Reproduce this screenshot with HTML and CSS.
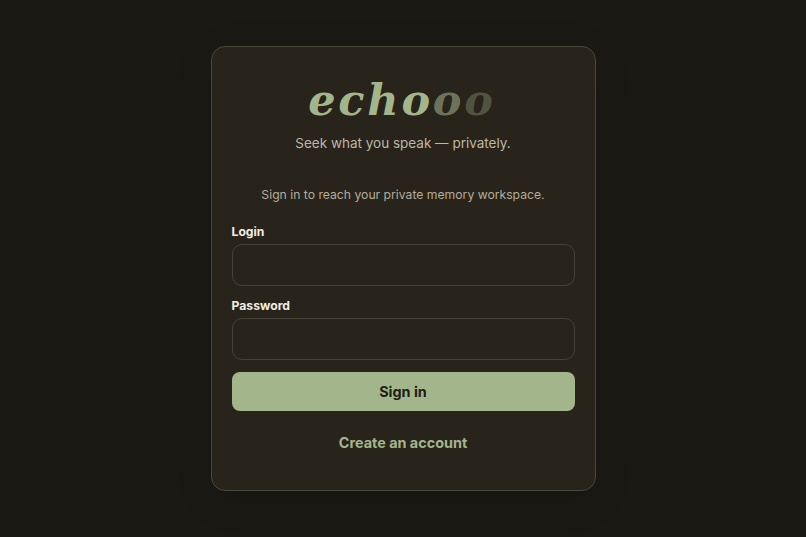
FILE: index.html
```html
<!DOCTYPE html>
<html lang="en">
<head>
<meta charset="utf-8">
<title>echooo</title>
<link rel="stylesheet" href="styles.css">
</head>
<body>
<main class="card">
  <h1 class="logo">echo<span class="fade1">o</span><span class="fade2">o</span></h1>
  <p class="tagline">Seek what you speak — privately.</p>
  <p class="intro">Sign in to reach your private memory workspace.</p>
  <form class="form">
    <label class="field"><span class="label">Login</span><input class="input" type="text"></label>
    <label class="field"><span class="label">Password</span><input class="input" type="password"></label>
    <button class="submit" type="button">Sign in</button>
  </form>
  <a class="create" href="#">Create an account</a>
</main>
</body>
</html>
```
FILE: styles.css
```css
* { box-sizing: border-box; }
html, body { height: 100%; }
body {
  margin: 0;
  background: #1b1914;
  font-family: Inter, "Liberation Sans", sans-serif;
  display: flex;
  justify-content: center;
  align-items: flex-start;
  padding-top: 46px;
  overflow: hidden;
}
.card {
  width: 385px;
  height: 445px;
  padding: 27px 20px 0;
  background: #28241b;
  border: 1px solid #4a463a;
  border-radius: 14px;
  box-shadow: 0 10px 40px rgba(0, 0, 0, 0.1);
  display: flex;
  flex-direction: column;
  align-items: stretch;
}
.logo {
  margin: 0;
  font-family: "DejaVu Serif", serif;
  font-style: italic;
  font-weight: 700;
  font-size: 43px;
  line-height: 52px;
  letter-spacing: 2.8px;
  text-indent: -2px;
  text-align: center;
  color: #a3b68b;
}
.fade1 { opacity: 0.55; }
.fade2 { opacity: 0.32; }
.tagline {
  margin: 7px 0 0;
  font-size: 13.5px;
  line-height: 20px;
  text-align: center;
  color: #bdb7a5;
}
.intro {
  margin: 32px 0 0;
  font-size: 12.2px;
  line-height: 20px;
  text-align: center;
  color: #b3ad9b;
}
.form {
  margin-top: 19px;
  display: flex;
  flex-direction: column;
}
.field { display: flex; flex-direction: column; margin-bottom: 12px; }
.label {
  font-size: 12.2px;
  font-weight: 700;
  line-height: 16px;
  color: #f1ede1;
  margin-bottom: 4px;
}
.input {
  height: 42px;
  background: #28241b;
  border: 1px solid #46423a;
  border-radius: 10px;
  outline: none;
}
.submit {
  height: 39px;
  border: 0;
  border-radius: 8px;
  background: #a3b68b;
  color: #1f1d16;
  font-family: inherit;
  font-size: 14.4px;
  font-weight: 700;
}
.create {
  margin-top: 22px;
  font-size: 14.4px;
  font-weight: 700;
  line-height: 20px;
  text-align: center;
  text-decoration: none;
  color: #a3b68b;
}
```
